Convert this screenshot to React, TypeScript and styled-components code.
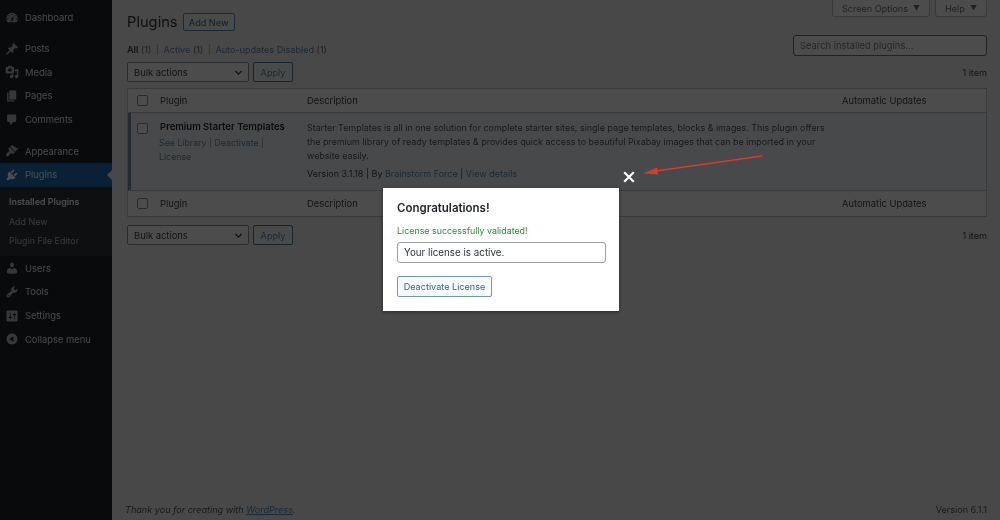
import React from 'react';
import styled, { createGlobalStyle } from 'styled-components';

const Global = createGlobalStyle`
  html, body { margin: 0; padding: 0; width: 1000px; height: 520px; overflow: hidden; background: #f0f0f1; }
  body { font-family: Inter, "Liberation Sans", sans-serif; font-size: 9.1px; color: #5a5f64; }
  * { box-sizing: border-box; }
`;

const Page = styled.div`
  position: relative;
  display: flex;
  width: 1000px;
  height: 520px;
  overflow: hidden;
  filter: blur(0.35px);
`;

const Sidebar = styled.nav`
  width: 112px;
  flex: none;
  background: #1d2327;
  padding-top: 6px;
  display: flex;
  flex-direction: column;
`;

const MenuItem = styled.div<{ $active?: boolean; $gap?: number }>`
  position: relative;
  display: flex;
  align-items: center;
  height: 23.7px;
  margin-top: ${p => p.$gap ?? 0}px;
  padding-left: 5px;
  gap: 6px;
  color: #f0f0f1;
  font-size: 9.4px;
  background: ${p => (p.$active ? '#2271b1' : 'transparent')};
  ${p => p.$active && `
    color: #fff;
    &::after {
      content: '';
      position: absolute;
      right: 0;
      top: 7px;
      border: 5px solid transparent;
      border-right-color: #f0f0f1;
      border-left-width: 0;
    }
  `}
`;

const MenuIcon = styled.svg<{ $active?: boolean }>`
  width: 14px;
  height: 14px;
  flex: none;
  fill: ${p => (p.$active ? '#fff' : '#b4b7ba')};
`;

const SubMenu = styled.div`
  background: #2c3338;
  padding: 5px 0 6px;
  display: flex;
  flex-direction: column;
`;

const SubItem = styled.div<{ $current?: boolean }>`
  display: flex;
  align-items: center;
  height: 19.5px;
  padding-left: 9px;
  font-size: 8.9px;
  color: ${p => (p.$current ? '#fff' : 'rgba(240,246,252,.7)')};
  font-weight: ${p => (p.$current ? 600 : 400)};
`;

const Main = styled.main`
  flex: 1;
  min-width: 0;
  display: flex;
  flex-direction: column;
  padding: 0 13px 0 15px;
`;

const TopTabs = styled.div`
  display: flex;
  justify-content: flex-end;
  gap: 5px;
  height: 18px;
  margin-bottom: -5px;
`;

const Tab = styled.div<{ $w: number }>`
  width: ${p => p.$w}px;
  height: 17px;
  background: #fff;
  border: 1px solid #c3c4c7;
  border-top: none;
  border-radius: 0 0 3px 3px;
  display: flex;
  align-items: center;
  justify-content: center;
  gap: 5px;
  color: #6a6f75;
  font-size: 9.1px;
  i { font-style: normal; font-size: 7px; }
`;

const TitleRow = styled.div`
  display: flex;
  align-items: center;
  gap: 5px;
  height: 18px;
`;

const Title = styled.h1`
  margin: 0;
  font-size: 14.7px;
  font-weight: 400;
  color: #2c3338;
`;

const AddNew = styled.div`
  width: 52px;
  height: 18px;
  border: 1px solid #5d8bb0;
  border-radius: 2px;
  background: #f6f7f7;
  color: #4d7ba0;
  font-size: 9.1px;
  font-weight: 500;
  display: flex;
  align-items: center;
  justify-content: center;
`;

const FilterRow = styled.div`
  display: flex;
  justify-content: space-between;
  align-items: flex-start;
  height: 27px;
  margin-top: 4px;
`;

const Filters = styled.div`
  margin-top: 9px;
  font-size: 9.1px;
  color: #6a6f75;
  b { color: #3c434a; font-weight: 600; }
  a { color: #5d8bb0; }
  span { color: #8c8f94; margin: 0 2px; }
`;

const Search = styled.div`
  width: 194px;
  height: 21px;
  border: 1px solid #6f7378;
  border-radius: 3px;
  background: #fff;
  color: #7a7f85;
  font-size: 9.4px;
  display: flex;
  align-items: center;
  padding-left: 6px;
`;

const Nav = styled.div<{ $mt: number }>`
  display: flex;
  align-items: center;
  gap: 4px;
  height: 20px;
  margin-top: ${p => p.$mt}px;
`;

const Select = styled.div`
  width: 122px;
  height: 20px;
  border: 1px solid #8c8f94;
  border-radius: 2px;
  background: #fff;
  color: #3c434a;
  font-size: 9.4px;
  display: flex;
  align-items: center;
  justify-content: space-between;
  padding: 0 5px 0 6px;
  svg { width: 9px; height: 9px; }
`;

const Apply = styled.div`
  width: 40px;
  height: 20px;
  border: 1px solid #4f7595;
  border-radius: 2px;
  background: #f6f7f7;
  color: #5d8bb0;
  font-size: 9.1px;
  display: flex;
  align-items: center;
  justify-content: center;
`;

const Count = styled.div`
  margin-left: auto;
  font-size: 9.1px;
  color: #3c434a;
`;

const Table = styled.div`
  margin-top: 6px;
  border: 1px solid #c3c4c7;
  background: #fff;
  display: flex;
  flex-direction: column;
`;

const HeadRow = styled.div<{ $h: number; $top?: boolean }>`
  display: grid;
  grid-template-columns: 32px 147px 535px 1fr;
  align-items: center;
  height: ${p => p.$h}px;
  color: #3c434a;
  font-size: 9.4px;
  ${p => p.$top && 'border-top: 1px solid #c3c4c7;'}
`;

const Check = styled.div<{ $mt?: number }>`
  width: 11px;
  height: 11px;
  margin-left: 9px;
  margin-top: ${p => p.$mt ?? 0}px;
  border: 1px solid #8c8f94;
  border-radius: 2px;
  background: #fff;
`;

const PluginRow = styled.div`
  display: grid;
  grid-template-columns: 32px 147px 535px 1fr;
  align-items: start;
  height: 78px;
  background: #f0f6fc;
  border-top: 1px solid #c3c4c7;
  box-shadow: inset 3px 0 0 #6d93b8;
  padding-top: 8px;
`;

const PluginName = styled.div`
  font-size: 9.5px;
  font-weight: 600;
  color: #1d2327;
  line-height: 12px;
`;

const RowActions = styled.div`
  margin-top: 3px;
  font-size: 8.8px;
  line-height: 14px;
  color: #5d8bb0;
  margin-left: -1px;
  span { color: #8c8f94; }
`;

const Desc = styled.div`
  font-size: 8.93px;
  line-height: 14px;
  width: 526px;
  color: #50575e;
`;

const Meta = styled.div`
  margin-top: 4px;
  font-size: 9px;
  line-height: 14px;
  color: #3c434a;
  a { color: #5d8bb0; }
`;

const Footer = styled.footer`
  margin-top: auto;
  height: 16px;
  display: flex;
  justify-content: space-between;
  font-size: 9.1px;
  color: #50575e;
  margin-left: -2px;
  em a { color: #5d8bb0; text-decoration: underline; }
`;

const Overlay = styled.div`
  position: absolute;
  inset: 0;
  background: rgba(0, 0, 0, 0.7);
`;

const Modal = styled.div`
  position: absolute;
  left: 383px;
  top: 188px;
  width: 236px;
  height: 123px;
  background: #fff;
  box-shadow: 0 1px 4px rgba(0, 0, 0, .45);
  padding: 12.5px 13px 0 14px;
  display: flex;
  flex-direction: column;
  align-items: flex-start;
`;

const ModalTitle = styled.h2`
  margin: 0;
  font-size: 11.5px;
  line-height: 15px;
  font-weight: 600;
  color: #1d2327;
`;

const Success = styled.div`
  margin-top: 9.5px;
  font-size: 8.9px;
  line-height: 12px;
  color: #2f8a38;
`;

const LicenseField = styled.div`
  margin-top: 5px;
  width: 209px;
  height: 21px;
  border: 1px solid #9a9ea3;
  border-radius: 3px;
  padding-left: 6px;
  display: flex;
  align-items: center;
  font-size: 9.8px;
  color: #2c3338;
`;

const Deactivate = styled.div`
  margin-top: 13px;
  width: 95px;
  height: 21px;
  border: 1px solid #6f97ba;
  border-radius: 2px;
  background: #f8f9fa;
  color: #2f6a9c;
  font-size: 9.1px;
  display: flex;
  align-items: center;
  justify-content: center;
`;

const CloseIcon = styled.svg`
  position: absolute;
  left: 623px;
  top: 171px;
  width: 12px;
  height: 12px;
`;

const Arrow = styled.svg`
  position: absolute;
  left: 640px;
  top: 152px;
  width: 126px;
  height: 26px;
`;

const ICONS = {
  dashboard: 'M3.76 16h12.48c1.1-1.37 1.76-3.11 1.76-5 0-4.42-3.58-8-8-8s-8 3.58-8 8c0 1.89.66 3.63 1.76 5zM10 4c.55 0 1 .45 1 1s-.45 1-1 1-1-.45-1-1 .45-1 1-1zM6 6c.55 0 1 .45 1 1s-.45 1-1 1-1-.45-1-1 .45-1 1-1zm8 0c.55 0 1 .45 1 1s-.45 1-1 1-1-.45-1-1 .45-1 1-1zm-5.37 5.55L12 7v6c0 1.1-.9 2-2 2s-2-.9-2-2c0-.57.24-1.08.63-1.45zM4 10c.55 0 1 .45 1 1s-.45 1-1 1-1-.45-1-1 .45-1 1-1zm12 0c.55 0 1 .45 1 1s-.45 1-1 1-1-.45-1-1 .45-1 1-1zm-5 3c0-.55-.45-1-1-1s-1 .45-1 1 .45 1 1 1 1-.45 1-1z',
  post: 'M10.44 3.02l1.82-1.82 6.36 6.35-1.83 1.82c-1.05-.68-2.48-.57-3.41.36l-.75.75c-.92.93-1.04 2.35-.35 3.41l-1.83 1.82-2.41-2.41-2.8 2.79c-.42.42-3.38 2.71-3.8 2.29s1.86-3.39 2.28-3.81l2.79-2.79L4.1 9.36l1.83-1.82c1.05.69 2.48.57 3.4-.36l.75-.75c.93-.92 1.05-2.35.36-3.41z',
  media: 'M13 11V4c0-.55-.45-1-1-1h-1.67L9 1H5L3.67 3H2c-.55 0-1 .45-1 1v7c0 .55.45 1 1 1h10c.55 0 1-.45 1-1zM7 4.5c1.38 0 2.5 1.12 2.5 2.5S8.38 9.5 7 9.5 4.5 8.38 4.5 7 5.62 4.5 7 4.5zM14 6h5v10.5c0 1.38-1.12 2.5-2.5 2.5S14 17.88 14 16.5s1.12-2.5 2.5-2.5c.17 0 .34.02.5.05V9h-3V6zm-4 8.05V13h2v3.5c0 1.38-1.12 2.5-2.5 2.5S7 17.88 7 16.5 8.12 14 9.5 14c.17 0 .34.02.5.05z',
  page: 'M6 15V2h10v13H6zm-1 1h8v2H3V5h2v11z',
  comments: 'M5 2h9c1.1 0 2 .9 2 2v7c0 1.1-.9 2-2 2h-2l-5 5v-5H5c-1.1 0-2-.9-2-2V4c0-1.1.9-2 2-2z',
  appearance: 'M14.48 11.06L7.41 3.99l1.5-1.5c.5-.56 2.3-.47 3.51.32 1.21.8 1.43 1.28 2.91 2.1 1.18.64 2.45 1.26 4.45.85zm-.71.71L6.7 4.7 4.93 6.47c-.39.39-.39 1.02 0 1.41l1.06 1.06c.39.39.39 1.03 0 1.42-.6.6-1.43 1.11-2.21 1.69-.35.26-.7.53-1.01.84-1.1 1.1-1.8 2.4-1.5 3.2.3.9 1.6 1.9 2.6 1.6.9-.3 1.8-1.1 2.6-2.1.6-.8 1.1-1.6 1.7-2.2.39-.39 1.03-.39 1.42 0l1.06 1.06c.39.39 1.02.39 1.41 0z',
  plugins: 'M13.11 4.36L9.87 7.6 8 5.73l3.24-3.24c.35-.34 1.05-.2 1.56.32.52.51.66 1.21.31 1.55zm-8 1.77l.91-1.12 9.01 9.01-1.19.84c-.71.71-2.63 1.16-3.82 1.16H6.14L4.9 17.26c-.59.59-1.54.59-2.12 0-.59-.58-.59-1.53 0-2.12l1.24-1.24v-3.88c0-1.13.4-3.19 1.09-3.89zm7.26 3.97l3.24-3.24c.34-.35 1.04-.21 1.55.31.52.51.66 1.21.31 1.55l-3.24 3.25z',
  users: 'M10 9.25c-2.27 0-2.73-3.44-2.73-3.44C7 4.02 7.82 2 9.97 2c2.16 0 2.98 2.02 2.71 3.81 0 0-.41 3.44-2.68 3.44zm0 2.57L12.72 10c2.39 0 4.52 2.33 4.52 4.53v2.49s-3.65 1.13-7.24 1.13c-3.65 0-7.24-1.13-7.24-1.13v-2.49c0-2.25 1.94-4.48 4.47-4.48z',
  tools: 'M16.68 9.77c-1.34 1.34-3.3 1.67-4.95.99l-5.41 6.52c-.99.99-2.59.99-3.58 0s-.99-2.59 0-3.57l6.52-5.42c-.68-1.65-.35-3.61.99-4.95 1.28-1.28 3.12-1.62 4.72-1.06l-2.89 2.89 2.82 2.82 2.86-2.87c.53 1.58.18 3.39-1.08 4.67zM3.81 16.21c.4.39 1.04.39 1.43 0 .4-.4.4-1.04 0-1.43-.39-.4-1.03-.4-1.43 0-.39.39-.39 1.03 0 1.43z',
  settings: 'M18 16V4c0-1.1-.9-2-2-2H4c-1.1 0-2 .9-2 2v12c0 1.1.9 2 2 2h12c1.1 0 2-.9 2-2zM8 11h1c.55 0 1 .45 1 1s-.45 1-1 1H8v1.5c0 .28-.22.5-.5.5s-.5-.22-.5-.5V13H6c-.55 0-1-.45-1-1s.45-1 1-1h1V5.5c0-.28.22-.5.5-.5s.5.22.5.5V11zm5-2h-1c-.55 0-1-.45-1-1s.45-1 1-1h1V5.5c0-.28.22-.5.5-.5s.5.22.5.5V7h1c.55 0 1 .45 1 1s-.45 1-1 1h-1v5.5c0 .28-.22.5-.5.5s-.5-.22-.5-.5V9z',
  collapse: 'M10 2.16c4.33 0 7.84 3.51 7.84 7.84s-3.51 7.84-7.84 7.84S2.16 14.33 2.16 10 5.71 2.16 10 2.16zm2 11.72V6.12L6.18 9.97z',
};

const Icon = ({ name, active }: { name: keyof typeof ICONS; active?: boolean }) => (
  <MenuIcon viewBox="0 0 20 20" $active={active}><path fillRule="evenodd" d={ICONS[name]} /></MenuIcon>
);

const Chevron = () => (
  <svg viewBox="0 0 10 10"><path d="M1.5 3.2 L5 6.8 L8.5 3.2" fill="none" stroke="#2c3338" strokeWidth="1.5" /></svg>
);

const BulkBar = ({ mt }: { mt: number }) => (
  <Nav $mt={mt}>
    <Select>Bulk actions <Chevron /></Select>
    <Apply>Apply</Apply>
    <Count>1 item</Count>
  </Nav>
);

const ColumnHeads = ({ h, top }: { h: number; top?: boolean }) => (
  <HeadRow $h={h} $top={top}>
    <Check />
    <div>Plugin</div>
    <div>Description</div>
    <div>Automatic Updates</div>
  </HeadRow>
);

export default function App() {
  return (
    <Page>
      <Global />
      <Sidebar>
        <MenuItem><Icon name="dashboard" />Dashboard</MenuItem>
        <MenuItem $gap={7}><Icon name="post" />Posts</MenuItem>
        <MenuItem><Icon name="media" />Media</MenuItem>
        <MenuItem><Icon name="page" />Pages</MenuItem>
        <MenuItem><Icon name="comments" />Comments</MenuItem>
        <MenuItem $gap={8}><Icon name="appearance" />Appearance</MenuItem>
        <MenuItem $active><Icon name="plugins" active />Plugins</MenuItem>
        <SubMenu>
          <SubItem $current>Installed Plugins</SubItem>
          <SubItem>Add New</SubItem>
          <SubItem>Plugin File Editor</SubItem>
        </SubMenu>
        <MenuItem><Icon name="users" />Users</MenuItem>
        <MenuItem><Icon name="tools" />Tools</MenuItem>
        <MenuItem><Icon name="settings" />Settings</MenuItem>
        <MenuItem><Icon name="collapse" />Collapse menu</MenuItem>
      </Sidebar>
      <Main>
        <TopTabs>
          <Tab $w={98}>Screen Options <i>▼</i></Tab>
          <Tab $w={52}>Help <i>▼</i></Tab>
        </TopTabs>
        <TitleRow>
          <Title>Plugins</Title>
          <AddNew>Add New</AddNew>
        </TitleRow>
        <FilterRow>
          <Filters><b>All</b> (1) <span>|</span> <a>Active</a> (1) <span>|</span> <a>Auto-updates Disabled</a> (1)</Filters>
          <Search>Search installed plugins...</Search>
        </FilterRow>
        <BulkBar mt={0} />
        <Table>
          <ColumnHeads h={23} />
          <PluginRow>
            <Check $mt={2} />
            <div>
              <PluginName>Premium Starter Templates</PluginName>
              <RowActions>See Library <span>|</span> Deactivate <span>|</span><br />License</RowActions>
            </div>
            <div>
              <Desc>Starter Templates is all in one solution for complete starter sites, single page templates, blocks &amp; images. This plugin offers the premium library of ready templates &amp; provides quick access to beautiful Pixabay images that can be imported in your website easily.</Desc>
              <Meta>Version 3.1.18 | By <a>Brainstorm Force</a> | <a>View details</a></Meta>
            </div>
            <div />
          </PluginRow>
          <ColumnHeads h={26} top />
        </Table>
        <BulkBar mt={8} />
        <Footer>
          <em>Thank you for creating with <a>WordPress</a>.</em>
          <span>Version 6.1.1</span>
        </Footer>
      </Main>
      <Overlay />
      <Arrow viewBox="0 0 126 26">
        <path d="M122 4 L16 19" stroke="#d43c2c" strokeWidth="1.6" strokeLinecap="round" fill="none" />
        <path d="M3 21.5 L17 15.5 L18 22.5 Z" fill="#d43c2c" />
      </Arrow>
      <CloseIcon viewBox="0 0 12 12">
        <path d="M2 2 L10 10 M10 2 L2 10" stroke="#fff" strokeWidth="2.2" strokeLinecap="square" />
      </CloseIcon>
      <Modal>
        <ModalTitle>Congratulations!</ModalTitle>
        <Success>License successfully validated!</Success>
        <LicenseField>Your license is active.</LicenseField>
        <Deactivate>Deactivate License</Deactivate>
      </Modal>
    </Page>
  );
}
